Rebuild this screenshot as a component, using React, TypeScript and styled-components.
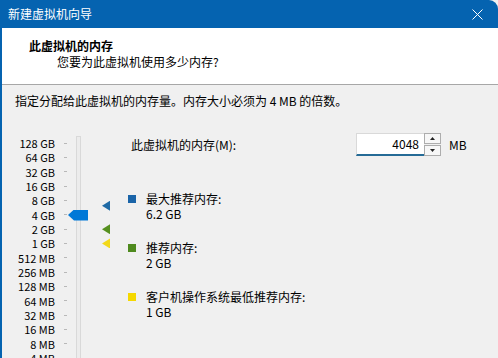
import React from 'react';
import styled, { createGlobalStyle } from 'styled-components';

const Global = createGlobalStyle`
  html, body { margin: 0; padding: 0; background: #f0f0f0; }
  body {
    font-family: "Noto Sans CJK SC", "Noto Sans", sans-serif;
    font-size: 12px;
    color: #000;
  }
`;

const BLUE = '#0563b0';
const ROW_H = 14.33;
const TOP_MB = 131072;

const Window = styled.div`
  width: 498px;
  height: 358px;
  overflow: hidden;
  display: flex;
  flex-direction: column;
  background: #f0f0f0;
`;

const TitleBar = styled.div`
  flex: none;
  height: 28px;
  background: ${BLUE};
  border-top-right-radius: 9px;
  color: #fff;
  display: flex;
  align-items: center;
  justify-content: space-between;
  padding: 0 15px 0 8px;
  line-height: 16px;
`;

const Frame = styled.div`
  flex: 1;
  display: flex;
  flex-direction: column;
  border-left: 2px solid ${BLUE};
`;

const Header = styled.div`
  flex: none;
  height: 57px;
  box-sizing: border-box;
  background: #fff;
  border-bottom: 1px solid #a7a7a7;
  padding: 10px 0 0 27px;
  line-height: 16px;
`;

const HeaderTitle = styled.div`
  font-weight: 700;
`;

const HeaderSub = styled.div`
  margin-left: 28px;
`;

const Body = styled.div`
  flex: 1;
  padding: 8px 0 0 13px;
  line-height: 16px;
`;

const Main = styled.div`
  display: flex;
  margin-top: 27px;
`;

const Scale = styled.div`
  position: relative;
  width: 113px;
  flex: none;
`;

const ScaleRow = styled.div`
  display: flex;
  align-items: center;
  height: ${ROW_H}px;
  line-height: ${ROW_H}px;
`;

const ScaleLabel = styled.span`
  width: 40px;
  font-size: 11px;
  text-align: right;
  white-space: nowrap;
`;

const Tick = styled.span`
  margin-left: 9px;
  width: 3px;
  height: 1px;
  background: #b8b8b8;
`;

const Track = styled.div`
  position: absolute;
  left: 61px;
  top: 0;
  bottom: -40px;
  width: 3px;
  border: 1px solid #d9d9d9;
  background: #ececec;
`;

const Thumb = styled.div`
  position: absolute;
  left: 53px;
  width: 20px;
  height: 11px;
  margin-top: -5.5px;
  background: #0078d7;
  clip-path: polygon(0 50%, 6px 0, 100% 0, 100% 100%, 6px 100%);
`;

const Marker = styled.div<{ $color: string }>`
  position: absolute;
  left: 87px;
  width: 8px;
  height: 10px;
  margin-top: -5px;
  background: ${(p) => p.$color};
  clip-path: polygon(0 50%, 100% 0, 100% 100%);
`;

const Panel = styled.div`
  flex: 1;
  display: flex;
  flex-direction: column;
`;

const MemRow = styled.div`
  display: flex;
  align-items: center;
  height: 23px;
  margin-top: -3px;
`;

const MemLabel = styled.span`
  width: 225px;
  margin-left: 3px;
`;

const NumberBox = styled.div`
  width: 68px;
  height: 23px;
  box-sizing: border-box;
  background: #fff;
  border: 1px solid #d9d9d9;
  border-right: none;
  border-bottom: 2px solid #256b96;
  text-align: right;
  padding-right: 5px;
  line-height: 20px;
`;

const Spinner = styled.div`
  width: 17px;
  height: 23px;
  display: flex;
  flex-direction: column;
  gap: 1px;
`;

const SpinButton = styled.div`
  flex: 1;
  box-sizing: border-box;
  border: 1px solid #adadad;
  background: #f7f7f7;
  display: flex;
  align-items: center;
  justify-content: center;
`;

const Unit = styled.span`
  margin-left: 8px;
`;

const Legend = styled.div`
  display: flex;
  flex-direction: column;
  gap: 19px;
  margin-top: 35px;
  line-height: 15px;
`;

const LegendItem = styled.div`
  display: flex;
  align-items: flex-start;
`;

const Swatch = styled.span<{ $color: string }>`
  flex: none;
  width: 8px;
  height: 8px;
  margin-top: 4px;
  margin-right: 10px;
  background: ${(p) => p.$color};
`;

const labels = [
  '128 GB', '64 GB', '32 GB', '16 GB', '8 GB', '4 GB', '2 GB', '1 GB',
  '512 MB', '256 MB', '128 MB', '64 MB', '32 MB', '16 MB', '8 MB', '4 MB',
];

const yFor = (mb: number) => ROW_H / 2 + Math.log2(TOP_MB / mb) * ROW_H;

const legend = [
  { color: '#1a64a8', marker: '#1f6aa5', title: '最大推荐内存:', value: '6.2 GB', mb: 6.2 * 1024 },
  { color: '#4f8a1e', marker: '#56901f', title: '推荐内存:', value: '2 GB', mb: 2048 },
  { color: '#f5d800', marker: '#f2d81a', title: '客户机操作系统最低推荐内存:', value: '1 GB', mb: 1024 },
];

const Arrow = ({ up }: { up?: boolean }) => (
  <svg width="5" height="3" viewBox="0 0 5 3">
    <polygon points={up ? '0,3 5,3 2.5,0' : '0,0 5,0 2.5,3'} fill="#222" />
  </svg>
);

export default function App() {
  return (
    <>
      <Global />
      <Window>
        <TitleBar>
          <span>新建虚拟机向导</span>
          <svg width="11" height="11" viewBox="0 0 11 11">
            <path d="M0.5 0.5 L10.5 10.5 M10.5 0.5 L0.5 10.5" stroke="#fff" strokeWidth="1" />
          </svg>
        </TitleBar>
        <Frame>
          <Header>
            <HeaderTitle>此虚拟机的内存</HeaderTitle>
            <HeaderSub>您要为此虚拟机使用多少内存?</HeaderSub>
          </Header>
          <Body>
            <div>指定分配给此虚拟机的内存量。内存大小必须为 4 MB 的倍数。</div>
            <Main>
              <Scale>
                {labels.map((l) => (
                  <ScaleRow key={l}>
                    <ScaleLabel>{l}</ScaleLabel>
                    <Tick />
                  </ScaleRow>
                ))}
                <Track />
                <Thumb style={{ top: yFor(4048) }} />
                {legend.map((m) => (
                  <Marker key={m.title} $color={m.marker} style={{ top: yFor(m.mb) }} />
                ))}
              </Scale>
              <Panel>
                <MemRow>
                  <MemLabel>此虚拟机的内存(M):</MemLabel>
                  <NumberBox>4048</NumberBox>
                  <Spinner>
                    <SpinButton><Arrow up /></SpinButton>
                    <SpinButton><Arrow /></SpinButton>
                  </Spinner>
                  <Unit>MB</Unit>
                </MemRow>
                <Legend>
                  {legend.map((m) => (
                    <LegendItem key={m.title}>
                      <Swatch $color={m.color} />
                      <div>
                        <div>{m.title}</div>
                        <div>{m.value}</div>
                      </div>
                    </LegendItem>
                  ))}
                </Legend>
              </Panel>
            </Main>
          </Body>
        </Frame>
      </Window>
    </>
  );
}
